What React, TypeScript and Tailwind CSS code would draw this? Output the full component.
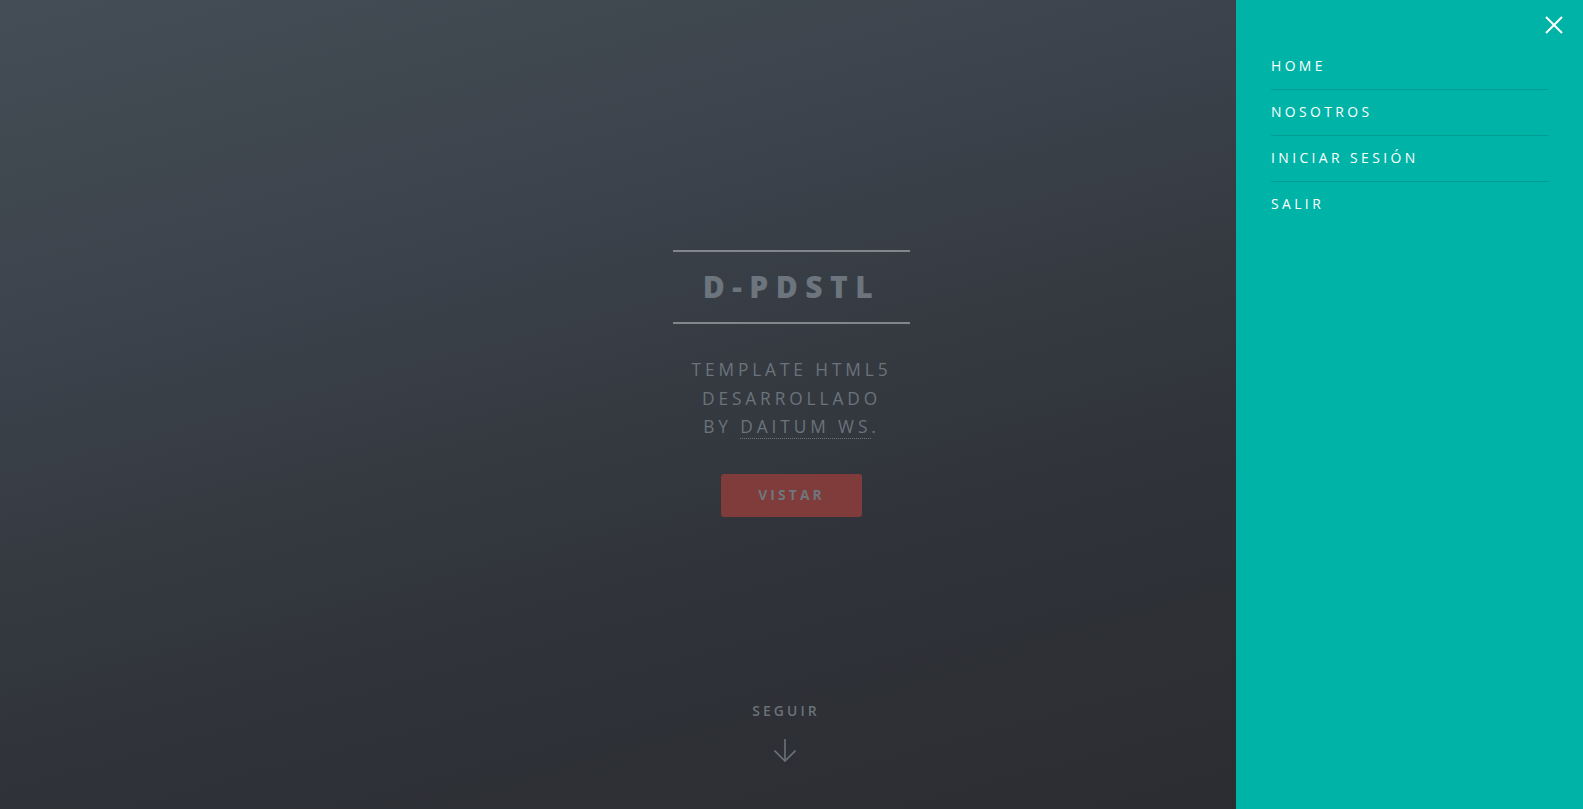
import React from 'react';

const navItems = ['Home', 'Nosotros', 'Iniciar Sesión', 'Salir'];

export default function App() {
  return (
    <div className="relative h-screen w-full overflow-hidden font-['Open_Sans',sans-serif] bg-[linear-gradient(165deg,#444d55_0%,#3b424b_30%,#303339_62%,#2a2b30_100%)]">
      {/* Banner */}
      <section className="flex h-full flex-col items-center text-center">
        <h2 className="mt-[250px] border-y-2 border-[#80868c] px-[30px] py-[10px] text-[30px] font-extrabold uppercase leading-[50px] tracking-[7.5px] text-[#6c757e]">
          D-PDSTL
        </h2>
        <p className="mt-[32px] text-[17.3px] uppercase leading-[28.6px] tracking-[3.9px] text-[#6b737b]">
          Template HTML5
          <br />
          desarrollado
          <br />
          by <a href="#" className="border-b border-dotted border-[#6b737b]">Daitum WS</a>.
        </p>
        <button className="mt-[32px] h-[43px] rounded-[3px] bg-[#7f3c3b] px-[37px] text-[13.9px] font-bold uppercase tracking-[3.1px] text-[#6f767c]">
          Vistar
        </button>
        <div className="mt-auto mb-[47px] mr-[14px] flex flex-col items-center text-[#6b7279]">
          <span className="pl-[3px] text-[13.9px] font-semibold uppercase tracking-[3.1px] translate-y-[3px]">Seguir</span>
          <svg width="22" height="23" viewBox="0 0 22 23" fill="none" stroke="currentColor" strokeWidth="1.6" className="mt-[20px] ml-[1px]">
            <path d="M11 0V22" />
            <path d="M0.5 11.5L11 22L21.5 11.5" />
          </svg>
        </div>
      </section>

      {/* Menu */}
      <nav className="absolute right-0 top-0 h-full w-[347px] bg-[#00b3a7] px-[35px] pt-[44px]">
        <button className="absolute right-[20px] top-[16px] text-white">
          <svg width="18" height="18" viewBox="0 0 18 18" stroke="currentColor" strokeWidth="2" fill="none">
            <path d="M1 1L17 17M17 1L1 17" />
          </svg>
        </button>
        <ul>
          {navItems.map((item, i) => (
            <li key={item} className={i > 0 ? 'border-t border-[#009c92]' : ''}>
              <a href="#" className="block -translate-y-[1px] text-[13.9px] font-normal uppercase leading-[45px] tracking-[3.4px] text-white">
                {item}
              </a>
            </li>
          ))}
        </ul>
      </nav>
    </div>
  );
}
